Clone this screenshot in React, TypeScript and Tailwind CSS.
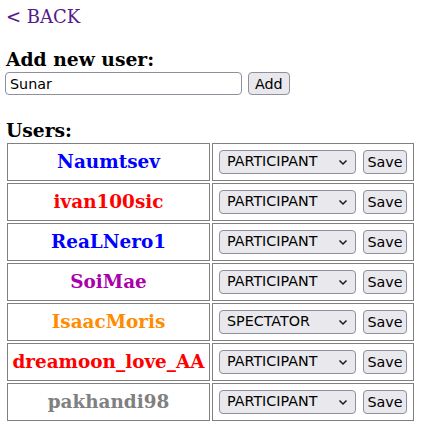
import React from "react";

const users: { name: string; color: string; role: string }[] = [
  { name: "Naumtsev", color: "text-[#0000ff]", role: "PARTICIPANT" },
  { name: "ivan100sic", color: "text-[#ff0000]", role: "PARTICIPANT" },
  { name: "ReaLNero1", color: "text-[#0000ff]", role: "PARTICIPANT" },
  { name: "SoiMae", color: "text-[#aa00aa]", role: "PARTICIPANT" },
  { name: "IsaacMoris", color: "text-[#ff8c00]", role: "SPECTATOR" },
  { name: "dreamoon_love_AA", color: "text-[#ff0000]", role: "PARTICIPANT" },
  { name: "pakhandi98", color: "text-[#808080]", role: "PARTICIPANT" },
];

function Chevron() {
  return (
    <svg width="10" height="7" viewBox="0 0 10 7" className="absolute right-[8px] top-[9px] pointer-events-none">
      <path d="M1.5 1.5 L5 5 L8.5 1.5" fill="none" stroke="#1a1a1a" strokeWidth="1.5" />
    </svg>
  );
}

export default function App() {
  const serif = { fontFamily: '"DejaVu Serif", serif' };
  return (
    <div className="px-[6px] pt-[6px] text-black bg-white min-h-[445px]" style={serif}>
      <a href="#" className="text-[#551a8b] text-[18px] leading-[22px] no-underline block">&lt; BACK</a>
      <h3 className="font-bold text-[18.72px] leading-[22px] mt-[20px]">Add new user:</h3>
      <div className="flex items-center gap-[6px] -ml-[1px] mt-[2px] font-['DejaVu_Sans',sans-serif] text-[14.3px]">
        <input
          defaultValue="Sunar"
          className="w-[237px] h-[23px] bg-white border border-[#8f8f9d] rounded-[4px] px-[4px] text-[14.3px] text-black outline-none"
        />
        <button className="h-[23px] px-[6px] bg-[#e9e9ed] border border-[#8f8f9d] rounded-[4px] text-[14.3px] leading-[20px] text-black">Add</button>
      </div>
      <h3 className="font-bold text-[18.72px] leading-[22px] mt-[24px]">Users:</h3>
      <table className="border-separate border-spacing-[2px] -ml-[1px]">
        <tbody>
          {users.map((u) => (
            <tr key={u.name}>
              <td className={`w-[203px] h-[38px] border border-[#808080] text-center font-bold text-[18.4px] align-middle ${u.color}`}>
                {u.name}
              </td>
              <td className="w-[202px] h-[38px] border border-[#808080] px-[6px] align-middle">
                <div className="flex items-center gap-[7px] font-['DejaVu_Sans',sans-serif] text-[14.3px]">
                  <div className="relative">
                    <select
                      defaultValue={u.role}
                      className="appearance-none w-[137px] h-[24px] bg-[#e9e9ed] border border-[#8f8f9d] rounded-[4px] pl-[7px] text-[14.3px] text-black outline-none"
                    >
                      <option>PARTICIPANT</option>
                      <option>SPECTATOR</option>
                    </select>
                    <Chevron />
                  </div>
                  <button className="h-[24px] w-[44px] bg-[#e9e9ed] border border-[#8f8f9d] rounded-[4px] text-[14.3px] leading-[20px] text-black">Save</button>
                </div>
              </td>
            </tr>
          ))}
        </tbody>
      </table>
    </div>
  );
}
